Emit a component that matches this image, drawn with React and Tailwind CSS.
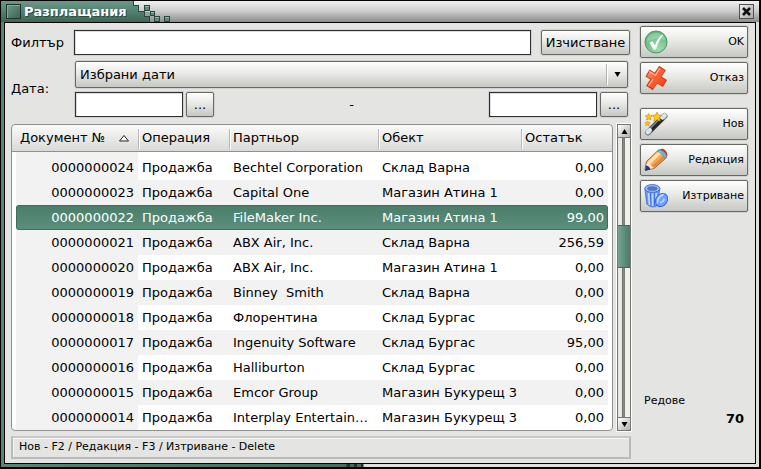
import React from "react";

const rows = [
  ["0000000024", "Bechtel Corporation", "Склад Варна", "0,00"],
  ["0000000023", "Capital One", "Магазин Атина 1", "0,00"],
  ["0000000022", "FileMaker Inc.", "Магазин Атина 1", "99,00"],
  ["0000000021", "ABX Air, Inc.", "Склад Варна", "256,59"],
  ["0000000020", "ABX Air, Inc.", "Магазин Атина 1", "0,00"],
  ["0000000019", "Binney  Smith", "Склад Варна", "0,00"],
  ["0000000018", "Флорентина", "Склад Бургас", "0,00"],
  ["0000000017", "Ingenuity Software", "Склад Бургас", "95,00"],
  ["0000000016", "Halliburton", "Склад Бургас", "0,00"],
  ["0000000015", "Emcor Group", "Магазин Букурещ 3", "0,00"],
  ["0000000014", "Interplay Entertain…", "Магазин Букурещ 3", "0,00"],
];
const selected = "0000000022";

const face =
  "rounded-xs border border-[#686864] bg-linear-to-b from-white via-[#e6e6e3] to-[#c6c8c3] shadow-[0_0_0_1px_#d2d2cf]";
const field =
  "h-[25px] border border-[#303034] bg-white px-1 outline-none shadow-[0_0_0_1px_#d0d0ce,inset_1px_1px_0_#dcdce0]";

function OkIcon() {
  return (
    <svg width="24" height="24" viewBox="0 0 24 24" aria-hidden="true">
      <defs>
        <radialGradient id="ok" cx="60%" cy="80%" r="75%">
          <stop offset="0" stopColor="#a0dcae" />
          <stop offset="1" stopColor="#62b47c" />
        </radialGradient>
      </defs>
      <circle cx="12" cy="12" r="11" fill="url(#ok)" stroke="#459a66" />
      <path d="M3 12C3 6 7 3 12 3s9 3 9 7c-5-2-12-2-18 2z" fill="#c8eed2" opacity=".35" />
      <path d="M5.500 12.500l3-1.500 2.500 4.500C12.500 10.500 15 7 18.500 4.500l.5 1C15.500 9.500 13.500 14 12 19.500h-2.500z" fill="#fff" />
    </svg>
  );
}

function CancelIcon() {
  return (
    <svg width="24" height="24" viewBox="0 0 24 24" aria-hidden="true">
      <defs>
        <linearGradient id="cx" gradientUnits="userSpaceOnUse" x1="2" y1="2" x2="22" y2="22">
          <stop offset="0" stopColor="#ffa67c" />
          <stop offset=".45" stopColor="#fb6138" />
          <stop offset="1" stopColor="#f53d0c" />
        </linearGradient>
      </defs>
      <g fill="none" strokeLinejoin="round">
        <path d="M3.500 7L21 17.500M18.500 2L5.500 22" stroke="#c63c14" strokeWidth="8" />
        <path d="M4.500 7.500L20 17M18 3L6.500 21" stroke="url(#cx)" strokeWidth="6.500" />
      </g>
      <path d="M5 5.500L11.500 9.500 15.500 2.500M9 13L4.500 20" fill="none" stroke="#ffc9ad" strokeWidth="1.200" opacity=".8" />
    </svg>
  );
}

function WandIcon() {
  return (
    <svg width="24" height="24" viewBox="0 0 24 24" aria-hidden="true">
      <path d="M4 20.500L20.500 4" stroke="#777" strokeWidth="6" strokeLinecap="round" />
      <path d="M6 18.500L18.500 6" stroke="#222529" strokeWidth="5" />
      <path d="M6 16.500L17 5.500" stroke="#8a8f92" strokeWidth="1.300" />
      <path d="M3.800 20.200l2-2M18.500 5.500l2-2" stroke="#d4e6ee" strokeWidth="4.500" strokeLinecap="round" />
      <g fill="#ffc814" stroke="#c98a0c" strokeWidth=".6" strokeLinejoin="round">
        <path d="M13 0l1.500 3 3.500.2-2.500 2.500.8 3.500-3.300-1.600-3.300 1.800.8-3.500L8 3.400l3.500-.4z" />
        <path d="M4.500 1.500l1.200 2.100 2.500.1-1.700 1.900.5 2.400-2.300-1.100L2.500 8l.5-2.400L1.200 3.800l2.300-.2z" />
        <path d="M3.500 9l.8 1.500 1.700.2-1.200 1.200.3 1.800-1.600-.8-1.600.8.300-1.800L1 10.700l1.700-.2z" />
      </g>
    </svg>
  );
}

function PencilIcon() {
  return (
    <svg width="24" height="24" viewBox="0 0 24 24" aria-hidden="true">
      <path d="M1 22L2.500 13.500 14.500 2Q19 .5 22.500 5 23.500 8 22 10L10 20.500z" fill="#f5a85a" stroke="#8b572c" strokeWidth=".9" />
      <path d="M3.500 14L14.500 3l3 2L6 16.500z" fill="#ffe0ae" />
      <path d="M7.500 18.500L19.500 7.500l2 2L9.500 20z" fill="#e58a3c" />
      <path d="M1.500 22L3 14.500l3 1 1 2 3 2.500z" fill="#f8e6cc" />
      <path d="M1 23l1-5.500q3.500 .5 4.500 4z" fill="#273575" />
      <path d="M13.500 3.500l2-1.800Q21 3 22.500 8.500L21 10.500Q19 5 13.500 3.500z" fill="#5cc1df" stroke="#2f8cad" strokeWidth=".5" />
      <path d="M16 1.500Q18.500 0 21 2t2 6Q21 3 16 1.500z" fill="#c33425" />
    </svg>
  );
}

function TrashIcon() {
  return (
    <svg width="24" height="24" viewBox="0 0 24 24" aria-hidden="true">
      <path d="M.8 4.500l2 15.500q5 5 10.700 1.500L15.800 4.500z" fill="#6a98f6" stroke="#3f66d8" strokeWidth=".8" />
      <path d="M4.500 9l1 12M8.500 9.500v12.500M12.300 9l-.6 11" stroke="#b8dbff" strokeWidth="1.800" />
      <path d="M6.500 9.500l.5 12M10.500 9.500v12" stroke="#3d69e8" strokeWidth=".9" />
      <ellipse cx="8.300" cy="4.500" rx="7.500" ry="3.900" fill="#9cc3fb" stroke="#466fdc" />
      <ellipse cx="8.300" cy="4.500" rx="5.200" ry="2.300" fill="#5477bd" />
      <ellipse cx="17.500" cy="16" rx="5.700" ry="7" transform="rotate(35 17.500 16)" fill="#6fa2fa" stroke="#3d66dc" />
      <path d="M13.500 19.500Q13 13 19.500 10.500" fill="none" stroke="#c4e3ff" strokeWidth="1.400" />
      <path d="M16 18.500q3.500-.5 4.500-4" fill="none" stroke="#a9d1ff" strokeWidth="1.800" />
    </svg>
  );
}

function SideButton({ icon, children }) {
  return (
    <button type="button" className={`${face} flex h-8 w-full items-center justify-between pr-[3px] pl-[3px] text-[11px]`}>
      {icon}
      <span>{children}</span>
    </button>
  );
}

function TitleSteps() {
  return (
    <svg className="h-[21px] w-[38px] shrink-0" viewBox="0 0 38 21" shapeRendering="crispEdges" aria-hidden="true">
      <defs>
        <linearGradient id="steps" gradientUnits="userSpaceOnUse" x1="0" y1="0" x2="0" y2="21">
          <stop offset="0" stopColor="#6b9989" />
          <stop offset="1" stopColor="#3c6656" />
        </linearGradient>
      </defs>
      <path d="M0 0v21h17v-6h-6v-5H6V4H1V0z" fill="url(#steps)" />
      <path d="M.5 0v4.500h5v6h5.500M11.500 10v5.500h5V21" fill="none" stroke="#2a473c" />
      <path d="M12 11h5v4h-5z" fill="#8fa39b" />
      <g fill="#5b8b79" stroke="#2a473c">
        <path d="M11.500 4.500h5v5h-5zM17.500 10.500h4v4h-4zM21.500 15.500h5v5h-5zM31.500 15.500h5v5h-5z" />
      </g>
      <path d="M12 5.500h4M18 11.500h3M22 16.500h4M32 16.500h4" stroke="#8fbaa9" />
    </svg>
  );
}

function Arrow({ up }) {
  return (
    <svg width="7" height="5" viewBox="0 0 7 5" aria-hidden="true">
      <path d={up ? "M3.500 0L6.500 5h-6z" : "M.5 0h6l-3 5z"} fill="#000" />
    </svg>
  );
}

function Th({ children, className = "" }) {
  return (
    <th className={`relative h-[27px] border-b border-[#91918f] p-0 pl-1 text-left font-normal ${className}`}>
      {children}
    </th>
  );
}

const divider =
  "before:absolute before:top-1 before:left-0 before:h-5 before:w-px before:bg-[#b8b8b6] before:shadow-[1px_0_0_#fff]";

export default function App() {
  return (
    <div className="flex min-h-screen flex-col border-t border-r-2 border-b-2 border-l border-black bg-[#dededc] bg-[linear-gradient(90deg,#568675,#41705f_345px,#1f352c_346px,#1f352c_349px,#41705f_349px,#41705f_353px,#1f352c_353px,#1f352c_356px,#41705f_356px,#41705f_360px,#1f352c_360px,#1f352c_362px,#dededc_363px)] font-['DejaVu_Sans','Liberation_Sans',sans-serif] text-[13px] leading-4 text-black">
      <header className="flex h-[21px] items-stretch bg-linear-to-b from-[#f0f0f0] via-[#cacaca] to-[#8c8c8c]">
        <div className="flex items-center bg-linear-to-b from-[#6b9989] to-[#3c6656] pl-[5px]">
          <span className="mr-[3px] h-[15px] w-[15px] border border-[#1d342b] bg-linear-to-br from-[#6b9989] to-[#3e6455] shadow-[inset_1px_1px_0_#83ad9f]" />
          <h1 className="w-[109px] text-[13px] font-bold whitespace-nowrap text-white [text-shadow:1px_1px_0_#2a493e]">Разплащания</h1>
        </div>
        <TitleSteps />
        <button type="button" aria-label="Затвори" className="mt-[3px] mr-[5px] ml-auto flex h-[15px] w-[15px] items-center justify-center border border-[#505050] bg-linear-to-br from-[#eeeeee] to-[#a8a8a8]">
          <svg width="9" height="9" viewBox="0 0 9 9" aria-hidden="true">
            <path d="M1 1l7 7M8 1L1 8" stroke="#111" strokeWidth="2.600" />
          </svg>
        </button>
      </header>

      <div className="mr-[3px] mb-[3px] ml-[3px] flex flex-1 border border-black bg-[#e4e4e2]">
        <main className="flex min-w-0 flex-1 flex-col pt-[7px] pl-1.5">
          <div className="flex items-center pr-px">
            <label htmlFor="filter" className="w-[63px] shrink-0">Филтър</label>
            <input id="filter" className={`${field} min-w-0 flex-1`} />
            <button type="button" className={`${face} ml-2.5 h-[25px] w-[89px] shrink-0`}>Изчистване</button>
          </div>

          <div className="mt-1.5 flex items-center pr-[3px]">
            <label htmlFor="period" className="w-16 shrink-0">Дата:</label>
            <div className="min-w-0 flex-1">
              <div className="relative">
                <select id="period" className={`${face} block h-[27px] w-full appearance-none pl-1 outline-none`}>
                  <option>Избрани дати</option>
                </select>
                <span className="pointer-events-none absolute top-[3px] right-0 flex h-[21px] w-[22px] items-center justify-center border-l border-[#b4b4b2] shadow-[inset_1px_0_0_#fff]">
                  <Arrow />
                </span>
              </div>
              <div className="mt-1 flex items-center">
                <input aria-label="От дата" className={`${field} w-[108px]`} />
                <button type="button" className={`${face} ml-[3px] h-[25px] w-7`}>...</button>
                <span className="flex-1 text-center">-</span>
                <input aria-label="До дата" className={`${field} w-[108px]`} />
                <button type="button" className={`${face} ml-[3px] h-[25px] w-7`}>...</button>
              </div>
            </div>
          </div>

          <div className="mt-[7px] flex">
            <div className="min-w-0 flex-1 overflow-hidden rounded-[4px] border border-[#91918f] bg-white bg-[linear-gradient(#fafafa,#d9d9d7_26px,#91918f_26px)] bg-[length:100%_27px] bg-no-repeat px-1">
              <table className="w-full table-fixed border-separate border-spacing-0">
                <colgroup>
                  <col className="w-[122px]" />
                  <col className="w-[91px]" />
                  <col />
                  <col className="w-[143px]" />
                  <col className="w-[87px]" />
                </colgroup>
                <thead>
                  <tr>
                    <Th>
                      <span className="flex items-center justify-between pr-2">
                        Документ №
                        <svg width="12" height="8" viewBox="0 0 12 8" aria-hidden="true">
                          <path d="M1.500 7h9L6 1.500z" fill="#fff" stroke="#222" />
                        </svg>
                      </span>
                    </Th>
                    <Th className={divider}>Операция</Th>
                    <Th className={divider}>Партньор</Th>
                    <Th className={divider}>Обект</Th>
                    <Th className={divider}>Остатък</Th>
                  </tr>
                </thead>
                <tbody>
                  {rows.map(([doc, partner, place, rest], i) => {
                    const on = doc === selected;
                    const size = i === 0 ? "h-7 pt-[3px]" : "h-[25px]";
                    const tone = on
                      ? "border-y border-[#3f6d5d] bg-linear-to-b from-[#4c7d6b] to-[#5a8f7c] text-white"
                      : i % 2
                        ? "bg-[#f2f2f2]"
                        : "bg-white";
                    const first = on
                      ? "rounded-l-[3px] border-y border-l border-[#3f6d5d] bg-linear-to-b from-[#4c7d6b] to-[#5a8f7c] text-white"
                      : "bg-[#f2f2f2]";
                    return (
                      <tr key={doc} aria-selected={on}>
                        <td className={`${size} ${first} pr-1 text-right`}>{doc}</td>
                        <td className={`${size} ${tone} pl-1`}>Продажба</td>
                        <td className={`${size} ${tone} pl-1 whitespace-pre`}>{partner}</td>
                        <td className={`${size} ${tone} pl-1 whitespace-nowrap`}>{place}</td>
                        <td className={`${size} ${tone} text-right ${on ? "rounded-r-[3px] border-r pr-[3px]" : "pr-1"}`}>{rest}</td>
                      </tr>
                    );
                  })}
                </tbody>
              </table>
            </div>
            <div className="ml-1 flex w-3.5 flex-col border border-[#777773] bg-[linear-gradient(90deg,#e8e8e6_4px,#666660_4px,#96968e_6px,#666660_7px,#f0f0ee_7px)] shadow-[0_0_0_1px_#fff]">
              <button type="button" aria-label="Нагоре" className="flex h-3 items-center justify-center bg-linear-to-br from-white to-[#b0b0ac] shadow-[0_1px_0_#777773]"><Arrow up /></button>
              <div className="flex-[88]" />
              <div className="h-[43px] border-y border-[#3f6d5d] bg-linear-to-r from-[#76a594] to-[#4c7968]" />
              <div className="flex-[150]" />
              <button type="button" aria-label="Надолу" className="flex h-3 items-center justify-center bg-linear-to-br from-white to-[#b0b0ac] shadow-[0_-1px_0_#777773]"><Arrow /></button>
            </div>
          </div>

          <footer className="mt-[5px] mb-1 h-[23px] border-2 border-[#bababa] border-t-[#c8c8c6] px-1.5 text-[11px] leading-[18px] shadow-[inset_1px_1px_0_#f4f4f2]">
            Нов - F2 / Редакция - F3 / Изтриване - Delete
          </footer>
        </main>

        <aside className="ml-[9px] flex w-[115px] shrink-0 flex-col pt-[3px] pr-[7px]">
          <div className="flex flex-col gap-1">
            <SideButton icon={<OkIcon />}>OK</SideButton>
            <SideButton icon={<CancelIcon />}>Отказ</SideButton>
          </div>
          <div className="mt-3.5 flex flex-col gap-1">
            <SideButton icon={<WandIcon />}>Нов</SideButton>
            <SideButton icon={<PencilIcon />}>Редакция</SideButton>
            <SideButton icon={<TrashIcon />}>Изтриване</SideButton>
          </div>
          <div className="mt-auto mb-9 px-1">
            <div className="text-[11px]">Редове</div>
            <div className="mt-0.5 text-right font-bold">70</div>
          </div>
        </aside>
      </div>
    </div>
  );
}
